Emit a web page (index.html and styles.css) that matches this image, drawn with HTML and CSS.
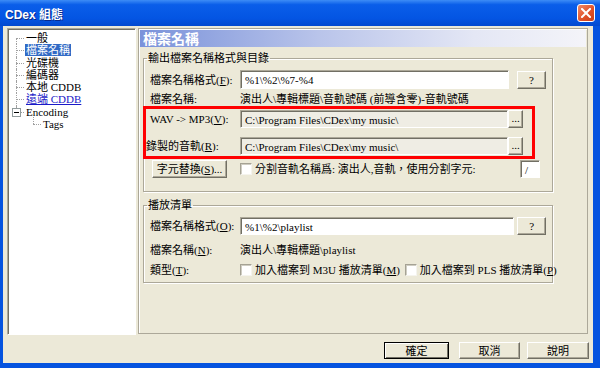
FILE: index.html
```html
<!DOCTYPE html>
<html lang="zh-Hant">
<head>
  <meta charset="UTF-8">
  <title>CDex 組態</title>
  <link rel="stylesheet" href="styles.css">
</head>
<body>
  <div class="window">
    <div class="titlebar">
      <span class="title">CDex 組態</span>
      <span class="close">
        <svg width="10" height="10" viewBox="0 0 10 10"><path d="M1 1 L9 9 M9 1 L1 9" stroke="#fff" stroke-width="2" stroke-linecap="square"/></svg>
      </span>
    </div>

    <div class="client">
      <div class="main">
        <ul class="tree">
          <li>一般</li>
          <li><span class="sel">檔案名稱</span></li>
          <li>光碟機</li>
          <li>編碼器</li>
          <li>本地 CDDB</li>
          <li><span class="hot">遠端 CDDB</span></li>
          <li>
            <span class="expander"></span>Encoding
            <ul>
              <li>Tags</li>
            </ul>
          </li>
        </ul>

        <div class="panel">
          <div class="panel-head">檔案名稱</div>

          <fieldset class="group g1">
            <legend>輸出檔案名稱格式與目錄</legend>
            <div class="row r1">
              <label>檔案名稱格式(<u>F</u>):</label>
              <div class="field w270">%1\%2\%7-%4</div>
              <div class="btn q">?</div>
            </div>
            <div class="row r2">
              <label>檔案名稱:</label>
              <span>演出人\專輯標題\音軌號碼 (前導含零)-音軌號碼</span>
            </div>
            <div class="row r3">
              <label>WAV -&gt; MP3(<u>V</u>):</label>
              <div class="field path">C:\Program Files\CDex\my music\</div>
              <div class="btn dots">...</div>
            </div>
            <div class="row r4">
              <label class="wide">錄製的音軌(<u>R</u>):</label>
              <div class="field path">C:\Program Files\CDex\my music\</div>
              <div class="btn dots">...</div>
            </div>
            <div class="row r5">
              <div class="btn repl">字元替換(<u>S</u>)...</div>
              <span class="check"></span>
              <span class="grow">分割音軌名稱爲: 演出人,音軌，使用分割字元:</span>
              <div class="field sep">/</div>
            </div>
          </fieldset>

          <fieldset class="group g2">
            <legend>播放清單</legend>
            <div class="row p1">
              <label>檔案名稱格式(<u>O</u>):</label>
              <div class="field w277">%1\%2\playlist</div>
              <div class="btn q2">?</div>
            </div>
            <div class="row p2">
              <label>檔案名稱(<u>N</u>):</label>
              <span>演出人\專輯標題\playlist</span>
            </div>
            <div class="row p3">
              <label>類型(<u>T</u>):</label>
              <span class="check"></span>
              <span>加入檔案到 M3U 播放清單(<u>M</u>)</span>
              <span class="check second"></span>
              <span>加入檔案到 PLS 播放清單(<u>P</u>)</span>
            </div>
          </fieldset>

          <div class="mark"></div>
        </div>
      </div>

      <div class="buttons">
        <div class="btn dlg ok">確定</div>
        <div class="btn dlg cancel">取消</div>
        <div class="btn dlg help">說明</div>
      </div>
    </div>
  </div>
</body>
</html>
```

FILE: styles.css
```css
body {
  margin: 0;
  width: 600px;
  height: 368px;
  overflow: hidden;
  font: 11px "Liberation Serif", "Noto Sans CJK TC", serif;
  color: #000;
  background: #0553df;
}
.window {
  display: flex;
  flex-direction: column;
  height: 368px;
  background: #0553df;
}
.titlebar {
  height: 26px;
  display: flex;
  align-items: center;
  padding: 0 5px;
  box-sizing: border-box;
  background: linear-gradient(#3d8cf6 0, #0a5ee9 18%, #0455e3 70%, #0349cf 100%);
  color: #fff;
  font: bold 12px "Liberation Sans", "Noto Sans CJK TC", sans-serif;
}
.title {
  flex: 1;
  text-shadow: 1px 1px #0a2a8a;
}
.close {
  width: 18px;
  height: 18px;
  box-sizing: border-box;
  border: 1px solid #fff;
  border-radius: 3px;
  background: linear-gradient(135deg, #f08a68, #df4f26 60%, #c8401a);
  display: flex;
  align-items: center;
  justify-content: center;
}
.client {
  flex: 1;
  margin: 0 7px 5px 3px;
  padding: 2px 4px 0 4px;
  background: #ece9d8;
  display: flex;
  flex-direction: column;
}
.main {
  display: flex;
  height: 307px;
}

/* tree */
.tree {
  width: 129px;
  margin: 0;
  padding: 3px 0 0 0;
  list-style: none;
  background: #fff;
  box-sizing: border-box;
  border: 1px solid;
  border-color: #aca899 #fff #fff #aca899;
  box-shadow: inset 1px 1px #716f64;
}
.tree li {
  position: relative;
  padding-left: 18px;
  line-height: 12.3px;
  white-space: nowrap;
}
.tree li::before {
  content: "";
  position: absolute;
  left: 8px;
  top: 6px;
  width: 8px;
  border-top: 1px dotted #a0a0a0;
}
.tree > li::after {
  content: "";
  position: absolute;
  left: 8px;
  top: 0;
  bottom: 0;
  border-left: 1px dotted #a0a0a0;
}
.tree > li:first-child::after { top: 6px; }
.tree > li:last-child::after { bottom: auto; height: 6px; }
.tree ul {
  margin: 0;
  padding: 0;
  list-style: none;
}
.tree ul li { padding-left: 17px; }
.tree ul li::before { left: 7px; }
.tree ul li::after {
  content: "";
  position: absolute;
  left: 7px;
  top: -1px;
  height: 7px;
  border-left: 1px dotted #a0a0a0;
}
.sel {
  background: #316ac5;
  color: #fff;
  padding: 0 1px;
  margin-left: -1px;
}
.hot {
  color: #1a1ac8;
  text-decoration: underline;
}
.expander {
  position: absolute;
  left: 4px;
  top: 2px;
  width: 9px;
  height: 9px;
  box-sizing: border-box;
  border: 1px solid #919b9c;
  background: #fff linear-gradient(#000, #000) no-repeat center / 5px 1px;
  z-index: 1;
}

/* right panel */
.panel {
  position: relative;
  flex: 1;
  margin: 0 1px 0 2px;
  height: 306px;
  box-sizing: border-box;
  border: 1px solid #aca899;
  box-shadow: inset 1px 1px #fff;
}
.panel-head {
  height: 17px;
  margin: 1px 1px 0;
  padding-left: 3px;
  background: linear-gradient(to right, #7a92da, #b9c4ea 40%, #e4e7f5 75%, #f4f4f9);
  color: #fff;
  font: bold 14px/17px "Noto Sans CJK TC", sans-serif;
}
.group {
  width: 410px;
  margin: 0 0 0 4px;
  padding: 0 6px;
  box-sizing: border-box;
  border: 1px solid #aca899;
  box-shadow: inset 1px 1px #fff, 1px 1px #fff;
  min-inline-size: 0;
}
.group legend {
  margin-left: -3px;
  padding: 0 1px;
  line-height: 14px;
}
.g1 { margin-top: 4px; padding-top: 5px; padding-bottom: 13px; }
.g2 { margin-top: 6px; padding-top: 5px; padding-bottom: 4px; }

.row {
  display: flex;
  align-items: center;
  height: 18px;
  line-height: 14px;
  white-space: nowrap;
}
.row label {
  width: 90px;
  flex: none;
}
.row label.wide { margin-left: -4px; width: 94px; }
.r1 { height: 19px; }
.r2 { margin-top: 2px; height: 16px; }
.r3 { margin-top: 3px; }
.r4 { margin-top: 9px; }
.r5 { margin-top: 5px; }
.p2 { margin-top: 7px; height: 16px; }
.p3 { margin-top: 4px; height: 16px; }

.field {
  height: 100%;
  box-sizing: border-box;
  padding: 2px 0 0 4px;
  background: #fff;
  border: 1px solid;
  border-color: #aca899 #fff #fff #aca899;
  box-shadow: inset 1px 1px #716f64;
  overflow: hidden;
}
.w270 { width: 270px; }
.w277 { width: 277px; }
.path { width: 268px; background: #efede4; }
.sep { width: 20px; margin-left: auto; margin-right: 6px; }

.btn {
  display: flex;
  align-items: center;
  justify-content: center;
  height: 18px;
  box-sizing: border-box;
  background: #ece9d8;
  border: 1px solid;
  border-color: #fff #716f64 #716f64 #fff;
  box-shadow: inset -1px -1px #aca899;
  line-height: 14px;
}
.q { width: 29px; margin-left: 8px; }
.q2 { width: 29px; margin-left: 3px; }
.dots { width: 15px; padding-bottom: 3px; }
.repl { width: 75px; margin-left: 2px; }

.check {
  width: 12px;
  height: 12px;
  flex: none;
  box-sizing: border-box;
  background: #fff;
  border: 1px solid;
  border-color: #a5a294 #f5f4ee #f5f4ee #a5a294;
  box-shadow: inset 1px 1px #cfcdc2;
  margin-right: 3px;
}
.r5 .check { margin-left: 13px; }
.check.second { margin-left: 5px; }
.grow { flex: 1; }

.mark {
  position: absolute;
  left: 4px;
  top: 77px;
  width: 392px;
  height: 53px;
  box-sizing: border-box;
  border: 3px solid #f00;
}

/* dialog buttons */
.buttons {
  display: flex;
  justify-content: flex-end;
  margin-top: 7px;
}
.dlg { height: 17px; }
.ok {
  width: 65px;
  border: 1px solid #000;
  box-shadow: inset 1px 1px #fff, inset -1px -1px #716f64;
}
.cancel { width: 61px; margin-left: 10px; }
.help { width: 62px; margin-left: 7px; }
```
